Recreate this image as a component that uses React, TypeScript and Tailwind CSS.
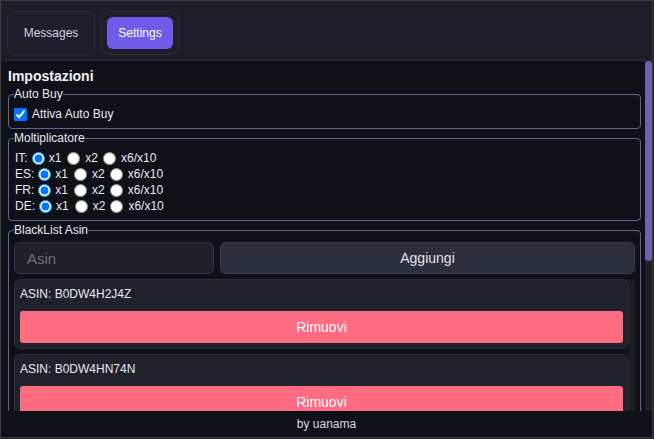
import React from 'react';

const font = { fontFamily: '"Liberation Sans", Arial, sans-serif' };

const rows = [
  { code: 'IT:', name: 'it' },
  { code: 'ES:', name: 'es' },
  { code: 'FR:', name: 'fr' },
  { code: 'DE:', name: 'de' },
];

const asins = ['B0DW4H2J4Z', 'B0DW4HN74N'];

function RadioRow({ code, name }: { code: string; name: string }) {
  return (
    <div className="flex items-center h-[16px]">
      <span>{code}</span>
      <input type="radio" name={name} defaultChecked className="w-[13px] h-[13px] m-0 ml-[4px]" />
      <span className="ml-[4px]">x1</span>
      <input type="radio" name={name} className="w-[13px] h-[13px] m-0 ml-[6px]" />
      <span className="ml-[5px]">x2</span>
      <input type="radio" name={name} className="w-[13px] h-[13px] m-0 ml-[5px]" />
      <span className="ml-[5px]">x6/x10</span>
    </div>
  );
}

export default function App() {
  return (
    <div className="w-[654px] h-[439px] bg-[#1f1f1f] text-[12px] text-[#e8e8f0]" style={font}>
      <div className="w-[653px] h-[438px] border border-[#3b3d41] flex flex-col bg-[#0f1119]">
        {/* tabs */}
        <header className="h-[60px] shrink-0 bg-[#1b1d27] border-b border-[#2b2e3a] flex gap-[6px] pl-[6px] pt-[10px]">
          <div className="w-[88px] h-[44px] rounded-lg border border-[#2a2d3a] bg-[#1c1e29] flex items-center justify-center text-[#d4d5e0]">
            Messages
          </div>
          <div className="w-[78px] h-[44px] rounded-lg border border-[#2a2d3a] bg-[#1c1e29] p-[5px]">
            <div className="w-[66px] h-[32px] rounded-md bg-[#6c5ce7] flex items-center justify-center text-white">
              Settings
            </div>
          </div>
        </header>

        <main className="flex-1 min-h-0 flex">
          <div className="flex-1 overflow-hidden pl-[7px] pr-[4px] pt-[5px]">
            <h2 className="text-[14px] font-bold leading-[20px] text-[#f2f2f7]">Impostazioni</h2>

            <fieldset className="mt-[1px] border border-[#62668a] rounded-[4px] px-[5px] pt-[4px] pb-[5px]">
              <legend className="leading-[14px]">Auto Buy</legend>
              <label className="flex items-center h-[18px]">
                <input type="checkbox" defaultChecked className="w-[13px] h-[13px] m-0" />
                <span className="ml-[5px]">Attiva Auto Buy</span>
              </label>
            </fieldset>

            <fieldset className="mt-[2px] border border-[#62668a] rounded-[4px] px-[6px] pt-[5px] pb-[6px]">
              <legend className="leading-[14px] -ml-[1px]">Moltiplicatore</legend>
              {rows.map((r) => (
                <RadioRow key={r.name} code={r.code} name={r.name} />
              ))}
            </fieldset>

            <fieldset className="mt-[2px] border border-[#62668a] rounded-[4px] px-[5px] pt-[5px]">
              <legend className="leading-[14px]">BlackList Asin</legend>
              <div className="flex gap-[6px]">
                <input
                  placeholder="Asin"
                  className="w-[200px] h-[32px] rounded-md border border-[#33364a] bg-[#1f2129] pl-[12px] text-[15px] text-[#e8e8f0] placeholder:text-[#6b6e7a] outline-none"
                />
                <button className="flex-1 h-[32px] rounded-md border border-[#3a3d4d] bg-[#2b2e3b] text-[14px] text-[#e2e3ec]">
                  Aggiungi
                </button>
              </div>
              <div className="flex mt-[5px]">
                <div className="flex-1 flex flex-col gap-[5px]">
                  {asins.map((a) => (
                    <div key={a} className="rounded-md border border-[#2b2e39] bg-[#20222b] px-[5px] pt-[6px] pb-[5px]">
                      <div className="leading-[16px]">ASIN: {a}</div>
                      <button className="mt-[9px] w-full h-[32px] rounded-[3px] bg-[#ff6b81] text-[14px] text-white">
                        Rimuovi
                      </button>
                    </div>
                  ))}
                </div>
                <div className="w-[6px] bg-[#1b1d26] rounded-t-[3px]" />
              </div>
            </fieldset>
          </div>

          {/* page scrollbar */}
          <div className="w-[7px] shrink-0 bg-[#1c1e28] rounded-b-full">
            <div className="h-[200px] rounded-full bg-[#6a62ad]" />
          </div>
        </main>

        <footer className="h-[26px] shrink-0 flex items-center justify-center text-[#d8d9e2]">
          by uanama
        </footer>
      </div>
    </div>
  );
}
